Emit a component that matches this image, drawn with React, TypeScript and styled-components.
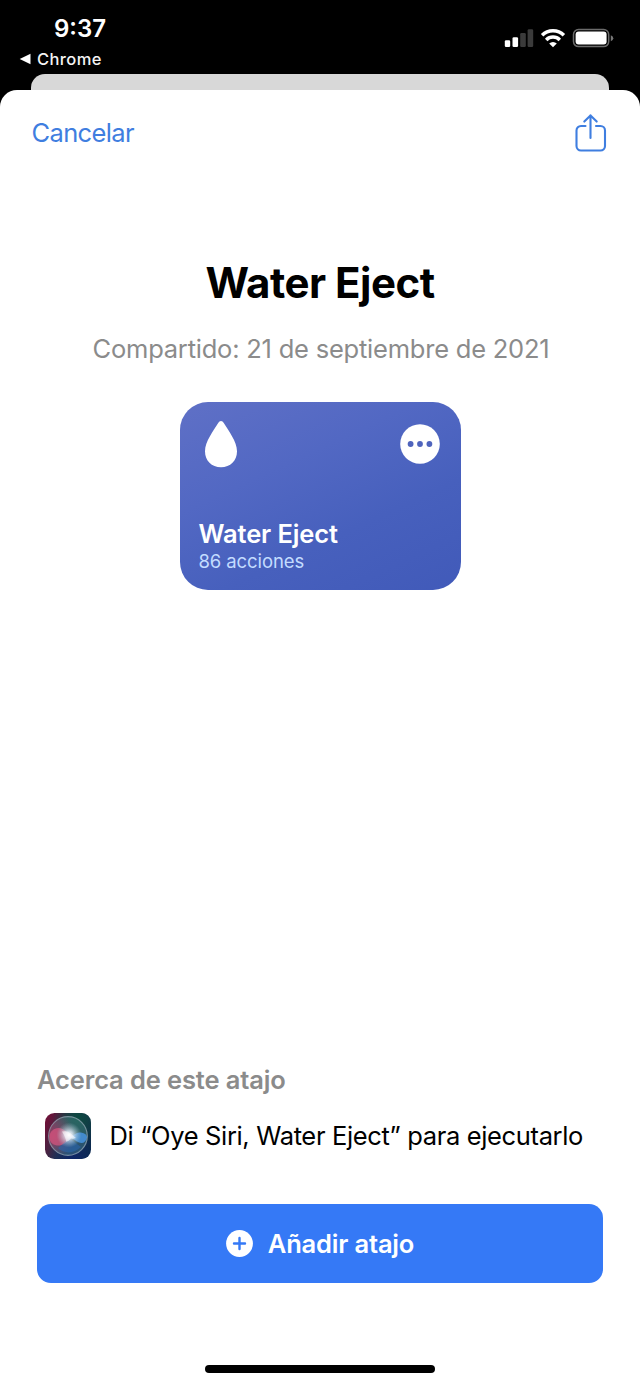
import React from "react";
import styled, { createGlobalStyle } from "styled-components";

const GlobalStyle = createGlobalStyle`
  *, *::before, *::after { box-sizing: border-box; }
  html, body, #root { height: 100%; }
  body {
    margin: 0;
    background: #000;
    font-family: Inter, "Liberation Sans", sans-serif;
  }
  button { font: inherit; border: 0; padding: 0; background: none; cursor: pointer; }
  svg { display: block; flex: none; }
`;

const Screen = styled.div`
  display: flex;
  flex-direction: column;
  width: 640px;
  height: 1385px;
  overflow: hidden;
  background: #000;
`;

const Text = styled.span<{ $size: number; $line: number; $weight?: number; $track?: number; $color?: string }>`
  display: block;
  white-space: nowrap;
  font-size: ${(p) => p.$size}px;
  line-height: ${(p) => p.$line}px;
  font-weight: ${(p) => p.$weight ?? 400};
  letter-spacing: ${(p) => p.$track ?? 0}px;
  color: ${(p) => p.$color ?? "#000"};
`;

const StatusBar = styled.header`
  display: flex;
  justify-content: space-between;
  flex: none;
  height: 74px;
  padding: 13px 26px 0 19px;
`;

const StatusLeft = styled.div`
  display: flex;
  flex-direction: column;
`;

const Clock = styled.div`
  padding-left: 35px;
`;

const BackLink = styled.button`
  display: flex;
  align-items: center;
  gap: 6px;
  margin-top: 1px;
`;

const StatusIcons = styled.div`
  padding-top: 15px;
`;

const BackSheet = styled.div`
  flex: none;
  height: 16px;
  margin: 0 31px;
  border-radius: 14px 14px 0 0;
  background: #d8d8d8;
`;

const Sheet = styled.main`
  display: flex;
  flex-direction: column;
  flex: 1;
  border-radius: 17px 17px 0 0;
  background: #fff;
`;

const NavBar = styled.nav`
  display: flex;
  align-items: center;
  justify-content: space-between;
  height: 86px;
  padding: 0 33px 0 31.5px;
`;

const Hero = styled.section`
  display: flex;
  flex-direction: column;
  align-items: center;
  padding-top: 81px;
`;

const Title = styled.h1`
  margin: 0;
`;

const Shared = styled.p`
  margin: 23px 0 0 2px;
`;

const Card = styled.article`
  display: flex;
  flex-direction: column;
  justify-content: space-between;
  width: 281px;
  height: 188px;
  margin-top: 36px;
  padding: 19px 21px 17px 19px;
  border-radius: 28px;
  background: linear-gradient(155deg, #5f70c6 0%, #5268c3 35%, #4760bd 65%, #415ab9 100%);
`;

const CardTop = styled.div`
  display: flex;
  justify-content: space-between;
  padding-left: 6px;
`;

const MoreButton = styled.button`
  margin-top: 3px;
  height: 40px;
`;

const Footer = styled.section`
  display: flex;
  flex-direction: column;
  margin-top: auto;
  padding: 0 37px 102px;
`;

const SiriRow = styled.div`
  display: flex;
  align-items: center;
  gap: 18.5px;
  height: 46px;
  margin: 16px 0 45px 8px;
`;

const AddButton = styled.button`
  display: flex;
  align-items: center;
  justify-content: center;
  gap: 15px;
  width: 100%;
  height: 79px;
  border-radius: 14px;
  background: #3579f6;
`;

const HomeIndicator = styled.div`
  position: absolute;
  left: 205px;
  top: 1364.5px;
  width: 230px;
  height: 8.5px;
  border-radius: 5px;
  background: #000;
`;

const StatusGlyphs = () => (
  <svg width="110" height="20" viewBox="0 0 110 20">
    <g fill="#fff">
      <rect x="0.8" y="12.2" width="5.4" height="6.8" rx="1.3" />
      <rect x="8.5" y="9.2" width="5.6" height="9.8" rx="1.3" />
    </g>
    <g fill="#3b3b3b">
      <rect x="16.2" y="5" width="5.6" height="14" rx="1.3" />
      <rect x="23.6" y="1.2" width="5.6" height="17.8" rx="1.3" />
    </g>
    <g fill="none" stroke="#fff" strokeWidth="3.5">
      <path d="M38.1 7.3a15.5 15.5 0 0 1 21.8 0" />
      <path d="M42.2 11.9a9.7 9.7 0 0 1 13.6 0" />
    </g>
    <path d="M49 19.2l-3.8-3.7a5.4 5.4 0 0 1 7.6 0z" fill="#fff" />
    <rect x="69.5" y="1.6" width="35.2" height="17" rx="5" fill="none" stroke="#6b6b6b" strokeWidth="1.5" />
    <rect x="71.6" y="3.6" width="31" height="13" rx="3" fill="#fff" />
    <path d="M106.8 7.2q2.5 1 2.5 3t-2.5 3z" fill="#777" />
  </svg>
);

const ShareIcon = () => (
  <svg width="32" height="40" viewBox="0 0 32 40" fill="none" stroke="#3f7ee0" strokeWidth="2.1" strokeLinecap="round" strokeLinejoin="round">
    <path d="M10.5 13H6a4.5 4.5 0 0 0-4.5 4.5v15.5A4.5 4.5 0 0 0 6 37.5h19.500a4.500 4.500 0 0 0 4.500-4.500v-15.500a4.500 4.500 0 0 0-4.500-4.500H21" />
    <path d="M15.500 25V2.400M9.300 8.600L15.500 2.400l6.200 6.200" />
  </svg>
);

const DropIcon = () => (
  <svg width="32" height="47" viewBox="0 0 32 47">
    <path d="M16 0C17.2 0 18 .8 18.8 2.1C23.5 9.7 32 20.8 32 30.2C32 39.8 25.4 46.2 16 46.2S0 39.8 0 30.2C0 20.8 8.5 9.7 13.2 2.1C14 .8 14.8 0 16 0Z" fill="#fff" />
  </svg>
);

const MoreIcon = () => (
  <svg width="40" height="40" viewBox="0 0 40 40">
    <circle cx="20" cy="20" r="19.8" fill="#fff" />
    <g fill="#4f64bd">
      <circle cx="10.6" cy="20" r="2.9" />
      <circle cx="20" cy="20" r="2.9" />
      <circle cx="29.4" cy="20" r="2.9" />
    </g>
  </svg>
);

const SiriIcon = () => (
  <svg width="46" height="46" viewBox="0 0 46 46">
    <defs>
      <linearGradient id="siriBase" x1="0" y1="0.3" x2="1" y2="0.7">
        <stop offset="0" stopColor="#6b1238" />
        <stop offset="0.45" stopColor="#26344c" />
        <stop offset="1" stopColor="#0b2b4b" />
      </linearGradient>
      <radialGradient id="siriGreen" cx="0.72" cy="0.12" r="0.55">
        <stop offset="0" stopColor="#0b4a40" />
        <stop offset="1" stopColor="#0b4a40" stopOpacity="0" />
      </radialGradient>
      <radialGradient id="siriNavy" cx="0.6" cy="1" r="0.55">
        <stop offset="0" stopColor="#0d2568" />
        <stop offset="1" stopColor="#0d2568" stopOpacity="0" />
      </radialGradient>
      <radialGradient id="siriPink" cx="0.1" cy="0.5" r="0.6">
        <stop offset="0" stopColor="#c03468" stopOpacity="0.6" />
        <stop offset="1" stopColor="#c03468" stopOpacity="0" />
      </radialGradient>
      <radialGradient id="siriGlow">
        <stop offset="0" stopColor="#fff" />
        <stop offset="0.3" stopColor="#e9f4ff" stopOpacity="0.8" />
        <stop offset="1" stopColor="#9fc6d0" stopOpacity="0" />
      </radialGradient>
      <clipPath id="siriTile"><rect width="46" height="46" rx="9.5" /></clipPath>
    </defs>
    <g clipPath="url(#siriTile)">
      <rect width="46" height="46" fill="url(#siriBase)" />
      <rect width="46" height="46" fill="url(#siriGreen)" />
      <rect width="46" height="46" fill="url(#siriNavy)" />
      <circle cx="23" cy="23" r="19.3" fill="#5a9c9a" fillOpacity="0.36" stroke="#9aaebb" strokeOpacity="0.7" strokeWidth="1.2" />
      <circle cx="23" cy="23" r="19" fill="url(#siriPink)" />
      <path d="M4.5 25C4 17 12 13 17.5 16C22 18.5 23 22 29 23.5C24 25 22 31 15 32.5C9 33 5 30 4.5 25Z" fill="#d8557f" fillOpacity="0.7" />
      <path d="M22 24C29 24 30 18.5 36 19.5C40 20 42 22 42 24.5C41 29 38 31 34 29.5C30 28 29 25 22 24Z" fill="#4a96e6" fillOpacity="0.8" />
      <path d="M13 35C17 32 21 28 24 25C28 28 32 31 36 34C29 41 19 41 13 35Z" fill="#2768b5" fillOpacity="0.5" />
      <circle cx="24" cy="22" r="12.5" fill="url(#siriGlow)" />
      <path d="M17 18.5Q23 17.5 25 20L31 25Q28 26 26 25.5Q23 29 21 28.5Q21 25 17 18.5Z" fill="#fff" fillOpacity="0.55" />
    </g>
  </svg>
);

const PlusIcon = () => (
  <svg width="27" height="27" viewBox="0 0 27 27">
    <circle cx="13.5" cy="13.5" r="13.4" fill="#fff" />
    <path d="M13.5 8v11M8 13.5h11" stroke="#3579f6" strokeWidth="2.4" strokeLinecap="round" />
  </svg>
);

export default function App() {
  return (
    <>
      <GlobalStyle />
      <Screen>
        <StatusBar>
          <StatusLeft>
            <Clock>
              <Text $size={24} $line={31} $weight={600} $color="#fff">9:37</Text>
            </Clock>
            <BackLink>
              <svg width="12" height="12" viewBox="0 0 12 12"><path d="M.7 6L11.5 .8v10.4z" fill="#fff" /></svg>
              <Text $size={16.5} $line={28} $weight={500} $track={0.4} $color="#f4f4f4">Chrome</Text>
            </BackLink>
          </StatusLeft>
          <StatusIcons><StatusGlyphs /></StatusIcons>
        </StatusBar>
        <BackSheet />
        <Sheet>
          <NavBar>
            <button><Text $size={25.5} $line={32} $track={-0.65} $color="#3f7ee0">Cancelar</Text></button>
            <button aria-label="Compartir"><ShareIcon /></button>
          </NavBar>
          <Hero>
            <Title><Text $size={42} $line={52} $weight={700} $track={-0.5}>Water Eject</Text></Title>
            <Shared><Text $size={25.5} $line={34} $track={-0.22} $color="#8b8b8b">Compartido: 21 de septiembre de 2021</Text></Shared>
            <Card>
              <CardTop>
                <DropIcon />
                <MoreButton aria-label="Más"><MoreIcon /></MoreButton>
              </CardTop>
              <div>
                <Text $size={25.5} $line={30} $weight={600} $track={-0.12} $color="#fff">Water Eject</Text>
                <Text $size={18.5} $line={24} $track={-0.1} $color="#c3dcff">86 acciones</Text>
              </div>
            </Card>
          </Hero>
          <Footer>
            <Text $size={25.5} $line={34} $weight={600} $track={-0.13} $color="#8b8b8b">Acerca de este atajo</Text>
            <SiriRow>
              <SiriIcon />
              <Text $size={25.5} $line={34} $track={-0.35}>Di “Oye Siri, Water Eject” para ejecutarlo</Text>
            </SiriRow>
            <AddButton>
              <PlusIcon />
              <Text $size={25.5} $line={34} $weight={600} $track={-0.18} $color="#fff">Añadir atajo</Text>
            </AddButton>
          </Footer>
        </Sheet>
        <HomeIndicator />
      </Screen>
    </>
  );
}
